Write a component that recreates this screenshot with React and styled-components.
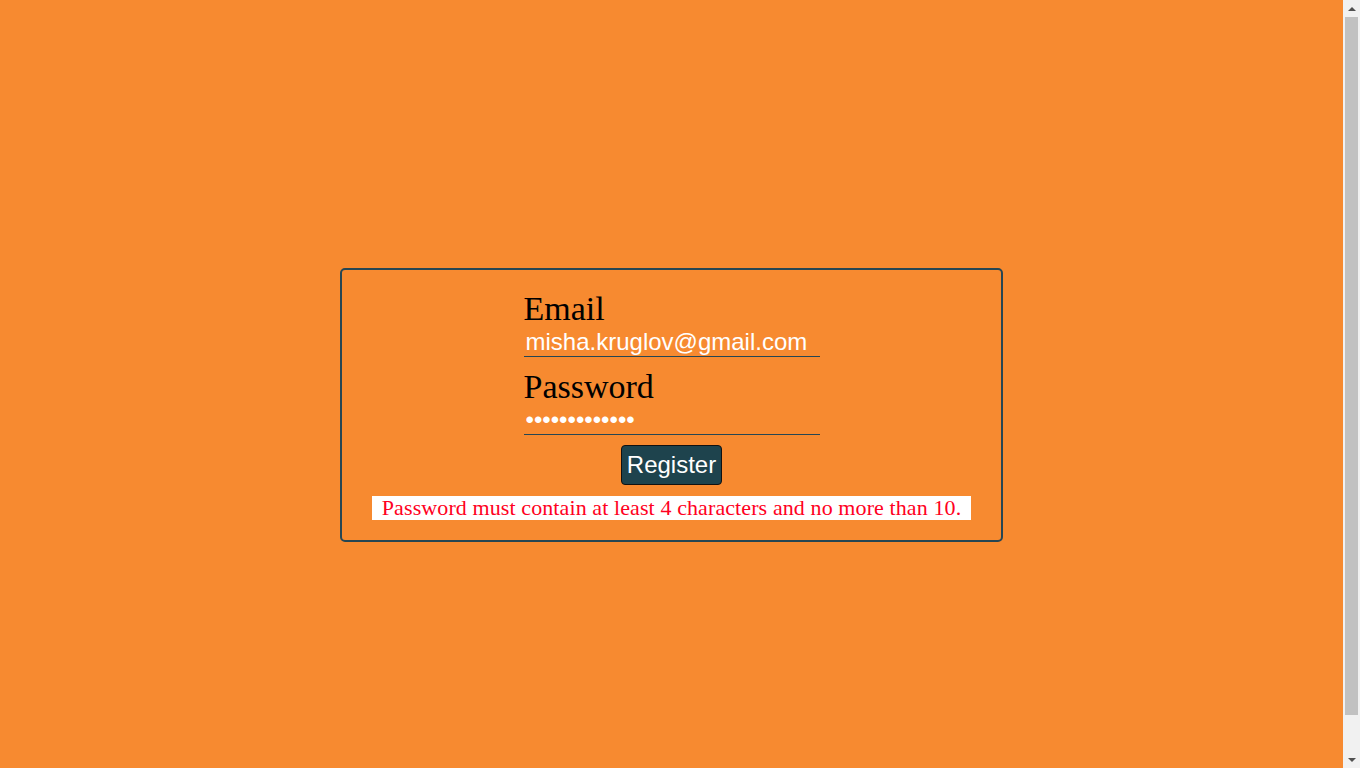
import React, { useState } from "react";
import styled, { createGlobalStyle } from "styled-components";

const GlobalStyle = createGlobalStyle`
  html, body {
    margin: 0;
    padding: 0;
    background: #f78a30;
  }
  body {
    font-family: "Liberation Serif", "Times New Roman", serif;
  }
`;

const Page = styled.div`
  min-height: 810px;
  margin-right: 17px;
  display: flex;
  align-items: center;
  justify-content: center;
  background: #f78a30;
`;

const Card = styled.form`
  width: 659px;
  border: 2px solid #264653;
  border-radius: 5px;
  padding: 20px 0 20px;
  display: flex;
  flex-direction: column;
  align-items: center;
`;

const Fields = styled.div`
  width: 296px;
  display: flex;
  flex-direction: column;
`;

const Label = styled.label`
  font-family: "Liberation Serif", "Times New Roman", serif;
  font-size: 34px;
  line-height: 38px;
  color: #000;
  margin-top: ${(p) => (p.$first ? "0" : "11px")};
`;

const Input = styled.input`
  font-family: "Liberation Sans", Arial, sans-serif;
  font-size: 24px;
  color: #fff;
  background: transparent;
  border: none;
  border-bottom: 1px solid #264653;
  padding: 0 2px;
  margin: 0;
  outline: none;
  width: 100%;
  box-sizing: border-box;
  height: 29px;
`;

const Button = styled.button`
  margin-top: 10px;
  font-family: "Liberation Sans", Arial, sans-serif;
  font-size: 24px;
  color: #fff;
  background: #1e434d;
  border: 1px solid #111;
  border-radius: 4px;
  padding: 5px 5px;
  line-height: 28px;
  cursor: pointer;
`;

const ErrorText = styled.div`
  margin-top: 11px;
  background: #fff;
  color: #ff0022;
  font-family: "Liberation Serif", "Times New Roman", serif;
  font-size: 22px;
  line-height: 24px;
  padding: 0 10px;
  letter-spacing: 0.1px;
`;

/* Browser scrollbar as seen in the reference: lies over the page edge */
const ScrollRail = styled.div`
  position: fixed;
  top: 0;
  right: 0;
  width: 17px;
  height: 100vh;
  background: #f1f1f1;
  display: flex;
  flex-direction: column;
`;

const ScrollArrow = styled.div`
  height: 17px;
  flex: none;
  display: flex;
  align-items: center;
  justify-content: center;
  &::before {
    content: "";
    width: 0;
    height: 0;
    border-left: 4px solid transparent;
    border-right: 4px solid transparent;
    ${(p) =>
      p.$down
        ? "border-top: 4px solid #505050;"
        : "border-bottom: 4px solid #505050;"}
  }
`;

const ScrollTrack = styled.div`
  flex: 1;
  display: flex;
  flex-direction: column;
`;

const ScrollThumb = styled.div`
  height: 95.1%;
  margin: 0 2px;
  background: #c1c1c1;
`;

export default function App() {
  const [email, setEmail] = useState("misha.kruglov@gmail.com");
  const [password, setPassword] = useState("1234567890123");
  return (
    <>
      <GlobalStyle />
      <Page>
        <Card onSubmit={(e) => e.preventDefault()}>
          <Fields>
            <Label $first htmlFor="email">Email</Label>
            <Input
              id="email"
              type="text"
              value={email}
              onChange={(e) => setEmail(e.target.value)}
            />
            <Label htmlFor="password">Password</Label>
            <Input
              id="password"
              type="password"
              value={password}
              onChange={(e) => setPassword(e.target.value)}
            />
          </Fields>
          <Button type="submit">Register</Button>
          <ErrorText>
            Password must contain at least 4 characters and no more than 10.
          </ErrorText>
        </Card>
      </Page>
      <ScrollRail aria-hidden="true">
        <ScrollArrow />
        <ScrollTrack>
          <ScrollThumb />
        </ScrollTrack>
        <ScrollArrow $down />
      </ScrollRail>
    </>
  );
}
